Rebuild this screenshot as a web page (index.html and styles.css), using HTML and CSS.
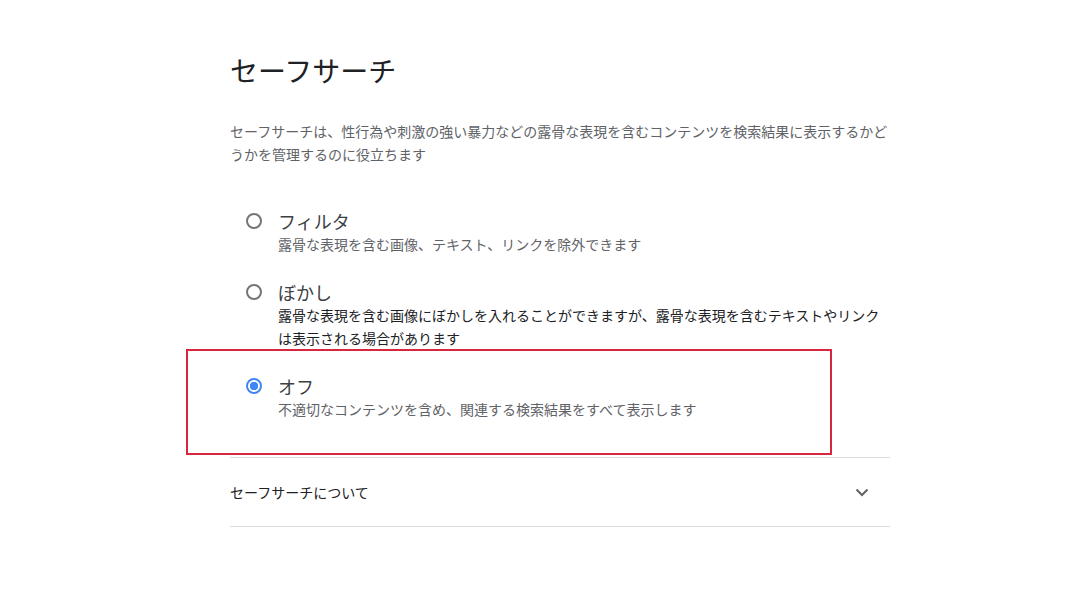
FILE: index.html
```html
<!DOCTYPE html>
<html lang="ja">
<head>
<meta charset="UTF-8">
<title>セーフサーチ</title>
<link rel="stylesheet" href="styles.css">
</head>
<body>
<main class="page">
<h1 class="titre">セーフサーチ</h1>
<p class="intro">セーフサーチは、性行為や刺激の強い暴力などの露骨な表現を含むコンテンツを検索結果に表示するかどうかを管理するのに役立ちます</p>

<div class="options">
<div class="option">
<span class="radio"></span>
<div class="option-texte">
<div class="option-nom">フィルタ</div>
<div class="option-desc">露骨な表現を含む画像、テキスト、リンクを除外できます</div>
</div>
</div>
<div class="option">
<span class="radio"></span>
<div class="option-texte">
<div class="option-nom">ぼかし</div>
<div class="option-desc sombre">露骨な表現を含む画像にぼかしを入れることができますが、露骨な表現を含むテキストやリンクは表示される場合があります</div>
</div>
</div>
<div class="option option-active">
<span class="radio radio-coche"></span>
<div class="option-texte">
<div class="option-nom">オフ</div>
<div class="option-desc">不適切なコンテンツを含め、関連する検索結果をすべて表示します</div>
</div>
<div class="surligne"></div>
</div>
</div>

<div class="accordeon">
<span>セーフサーチについて</span>
<svg class="chevron" width="14" height="9" viewBox="0 0 14 9"><path d="M1.5 1.5 L7 7 L12.5 1.5" fill="none" stroke="#5f6368" stroke-width="2"/></svg>
</div>
</main>
</body>
</html>
```

FILE: styles.css
```css
body {
margin: 0;
background: #fff;
font-family: "Noto Sans CJK JP", sans-serif;
color: #202124;
}
.page {
width: 660px;
margin-left: 230px;
padding-top: 50px;
}
.titre {
margin: 0;
font-size: 28px;
font-weight: 400;
line-height: 40px;
}
.intro {
margin: 30px 0 0;
font-size: 14px;
line-height: 23px;
color: #5f6368;
}
.options {
margin-top: 43px;
margin-bottom: 36px;
}
.option {
position: relative;
display: flex;
padding-left: 16px;
margin-bottom: 24px;
}
.option:last-child {
margin-bottom: 0;
}
.radio {
flex: none;
box-sizing: border-box;
width: 16px;
height: 16px;
margin-top: 4px;
margin-right: 16px;
border: 2px solid #757575;
border-radius: 50%;
}
.radio-coche {
border-color: #4285f4;
background: radial-gradient(circle, #4285f4 0 4px, #fff 4.5px);
}
.option-texte {
flex: 1;
}
.option-nom {
font-size: 18px;
line-height: 24px;
color: #3c4043;
}
.option-desc {
font-size: 14px;
line-height: 23px;
color: #5f6368;
}
.option-desc.sombre {
color: #202124;
}
.surligne {
position: absolute;
top: -25px;
left: -44px;
width: 646px;
height: 106px;
box-sizing: border-box;
border: 2px solid #d7263d;
}
.accordeon {
display: flex;
align-items: center;
justify-content: space-between;
height: 68px;
border-top: 1px solid #dadce0;
border-bottom: 1px solid #dadce0;
font-size: 14px;
padding-right: 21px;
}
```
